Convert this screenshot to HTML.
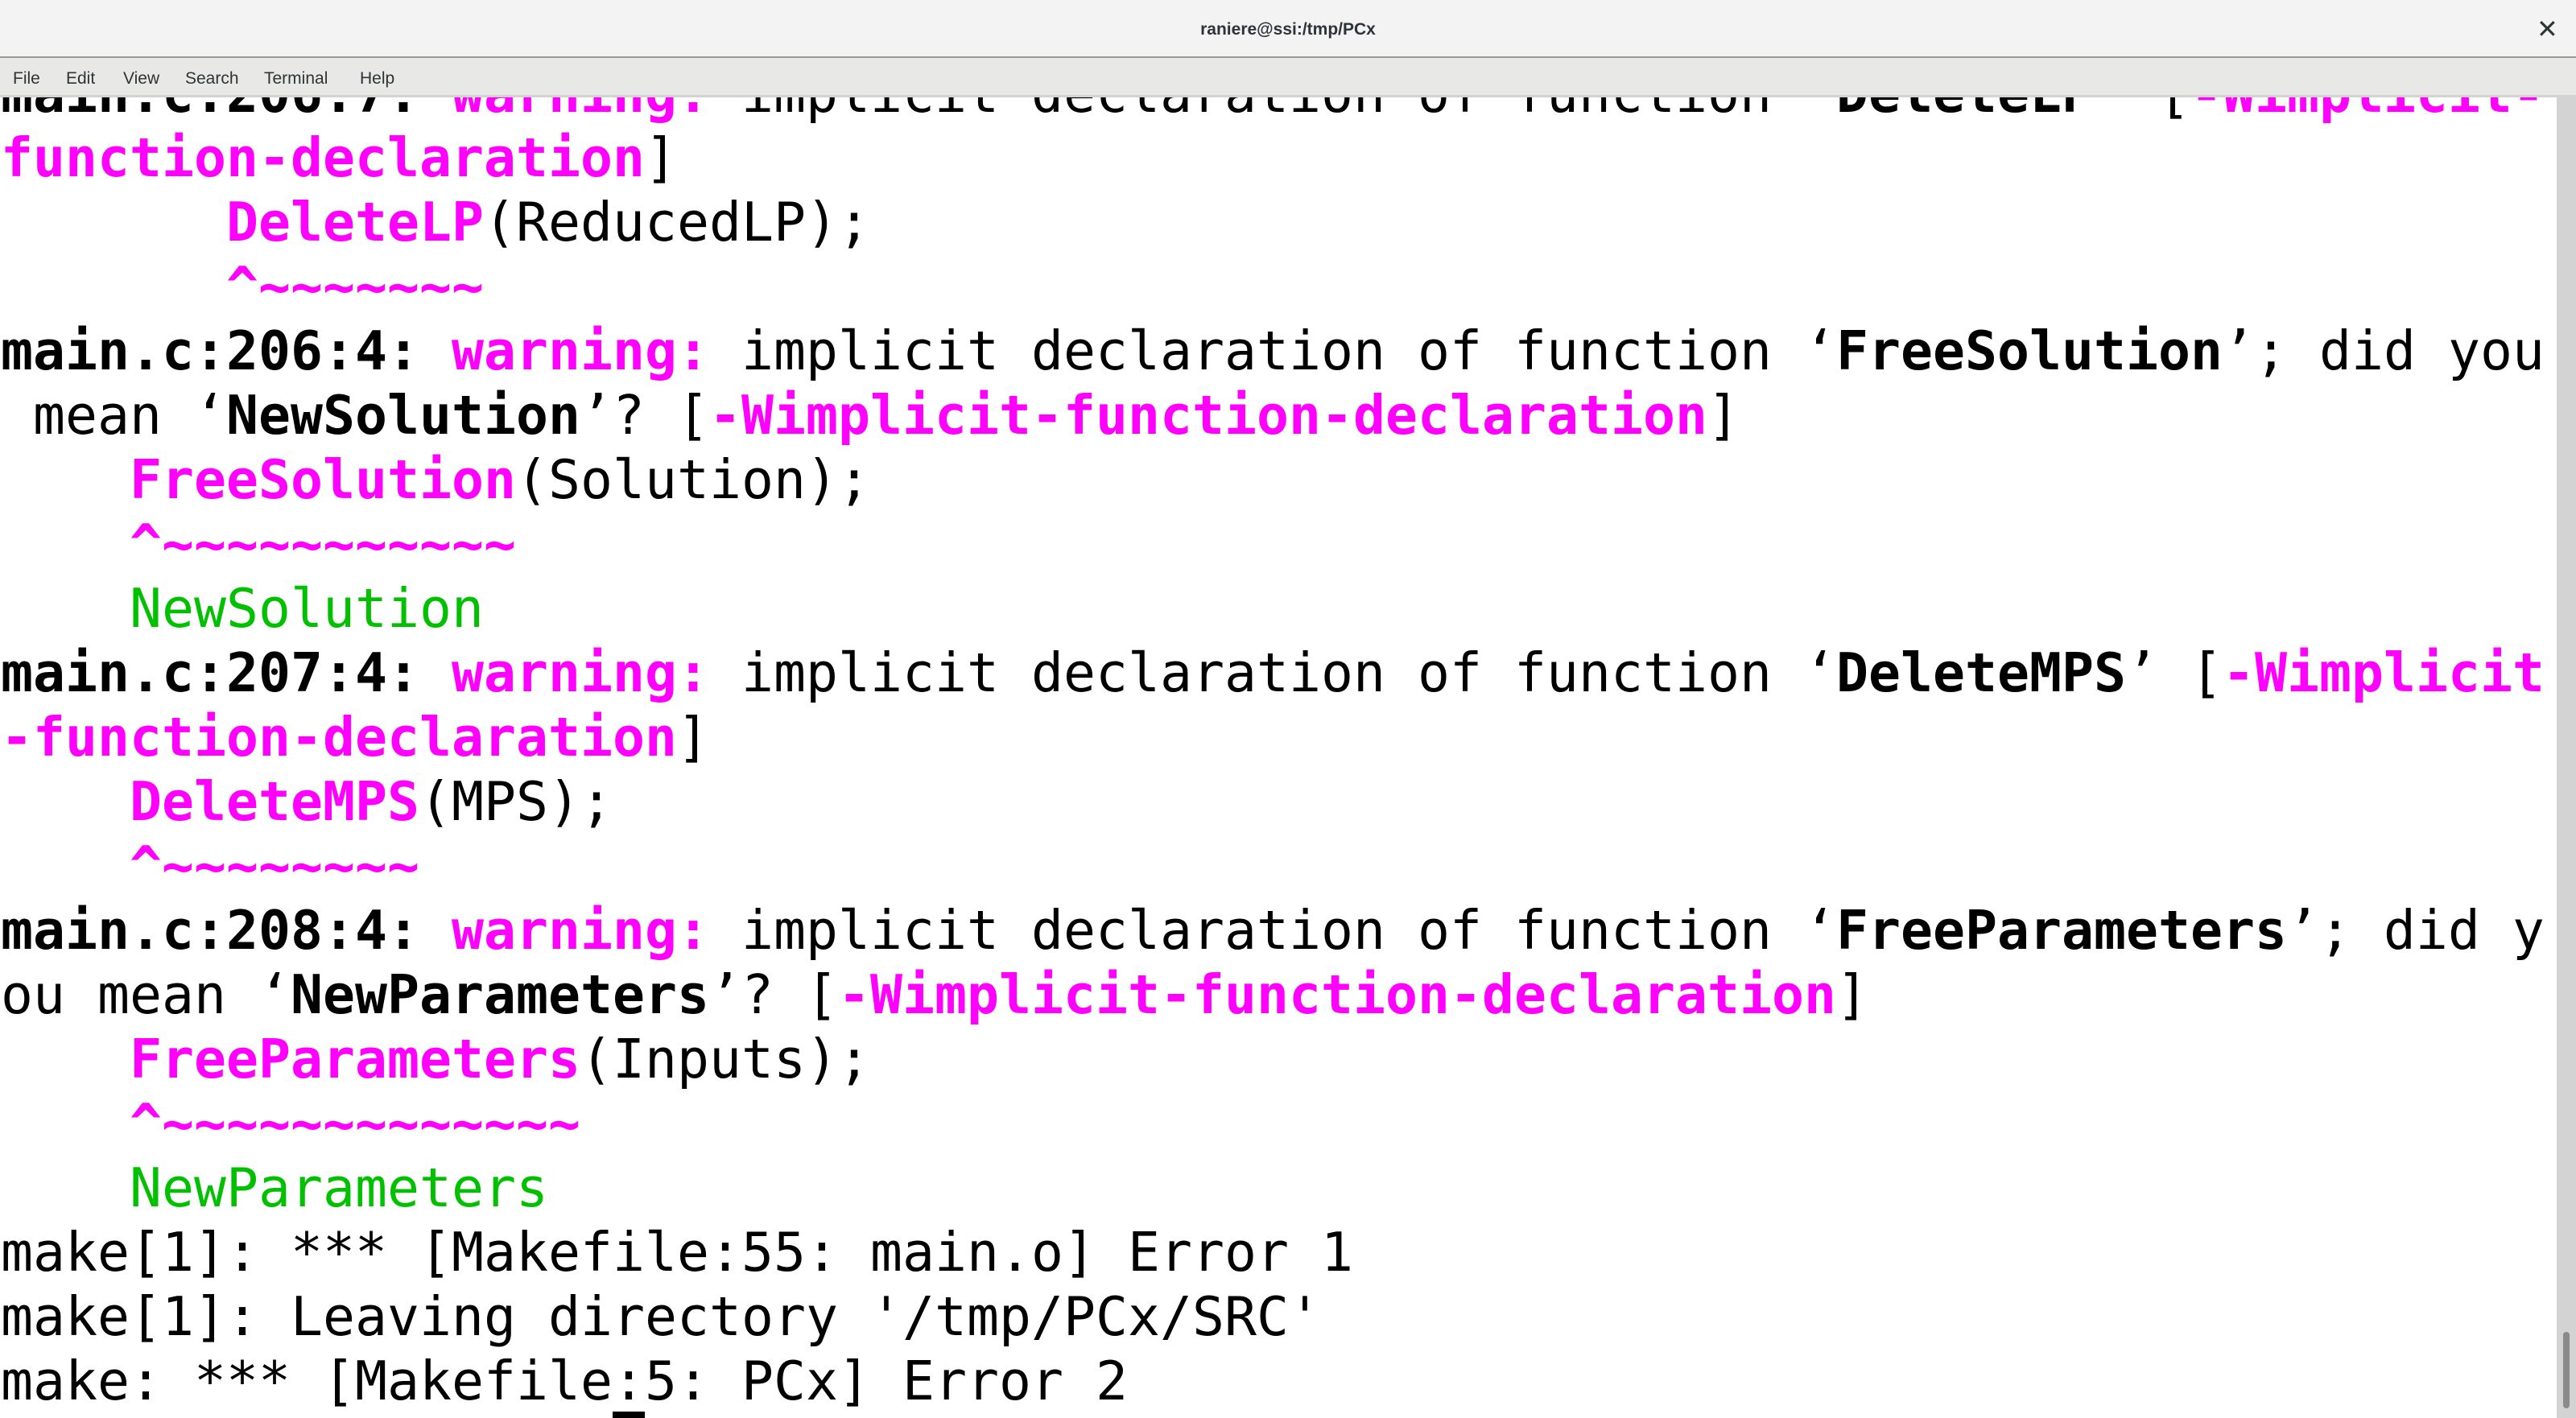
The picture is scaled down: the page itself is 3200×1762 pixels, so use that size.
<!DOCTYPE html>
<html><head><meta charset="utf-8"><style>
html,body{margin:0;padding:0;width:3200px;height:1762px;overflow:hidden;background:#fff}
#title{position:absolute;left:0;top:0;width:3200px;height:72px;background:#f3f3f3;border-bottom:2px solid #9a9a94;box-sizing:border-box}
#title .t{position:absolute;left:0;right:0;top:25px;text-align:center;font:bold 21px "Liberation Sans",sans-serif;color:#2e3436}
#title .x{position:absolute;left:3151px;top:20px;font:bold 32px "DejaVu Sans",sans-serif;color:#2e3436;line-height:32px}
#menu{position:absolute;left:0;top:72px;width:3200px;height:49px;background:#e8e8e6;border-bottom:3px solid #d2d2d0;box-sizing:border-box;font:21px "Liberation Sans",sans-serif;color:#2e3436}
#menu span{position:absolute;top:14px}
#term{position:absolute;left:0;top:121px;width:3176px;height:1641px;overflow:hidden}
#inner{position:absolute;left:1px;top:-45px;font-family:"DejaVu Sans Mono",monospace;font-size:66.44px;line-height:80px;color:#000}
#inner div{height:80px;white-space:pre}
.m{color:#ff00ff;font-weight:bold}
.b{font-weight:bold}
.g{color:#00c000}
#sb{position:absolute;left:3176px;top:121px;width:24px;height:1641px;background:#d3d3d3}
#thumb{position:absolute;left:3184px;top:1655px;width:8px;height:95px;background:#8a8a8a;border-radius:4px}
#cur{position:absolute;left:761px;top:1754px;width:40px;height:8px;background:#000}
</style></head><body>
<div id="title"><div class="t">raniere@ssi:/tmp/PCx</div><div class="x">✕</div></div>
<div id="menu"><span style="left:16px">File</span><span style="left:82px">Edit</span><span style="left:153px">View</span><span style="left:230px">Search</span><span style="left:328px">Terminal</span><span style="left:447px">Help</span></div>
<div id="term"><div id="inner"><div><span class="b">main.c:206:7:</span> <span class="m">warning:</span> implicit declaration of function ‘<span class="b">DeleteLP</span>’ [<span class="m">-Wimplicit-</span></div><div><span class="m">function-declaration</span>]</div><div>       <span class="m">DeleteLP</span>(ReducedLP);</div><div>       <span class="m">^~~~~~~~</span></div><div><span class="b">main.c:206:4:</span> <span class="m">warning:</span> implicit declaration of function ‘<span class="b">FreeSolution</span>’; did you</div><div> mean ‘<span class="b">NewSolution</span>’? [<span class="m">-Wimplicit-function-declaration</span>]</div><div>    <span class="m">FreeSolution</span>(Solution);</div><div>    <span class="m">^~~~~~~~~~~~</span></div><div>    <span class="g">NewSolution</span></div><div><span class="b">main.c:207:4:</span> <span class="m">warning:</span> implicit declaration of function ‘<span class="b">DeleteMPS</span>’ [<span class="m">-Wimplicit</span></div><div><span class="m">-function-declaration</span>]</div><div>    <span class="m">DeleteMPS</span>(MPS);</div><div>    <span class="m">^~~~~~~~~</span></div><div><span class="b">main.c:208:4:</span> <span class="m">warning:</span> implicit declaration of function ‘<span class="b">FreeParameters</span>’; did y</div><div>ou mean ‘<span class="b">NewParameters</span>’? [<span class="m">-Wimplicit-function-declaration</span>]</div><div>    <span class="m">FreeParameters</span>(Inputs);</div><div>    <span class="m">^~~~~~~~~~~~~~</span></div><div>    <span class="g">NewParameters</span></div><div>make[1]: *** [Makefile:55: main.o] Error 1</div><div>make[1]: Leaving directory '/tmp/PCx/SRC'</div><div>make: *** [Makefile:5: PCx] Error 2</div></div></div>
<div id="sb"></div><div id="thumb"></div>
<div id="cur"></div>
</body></html>
